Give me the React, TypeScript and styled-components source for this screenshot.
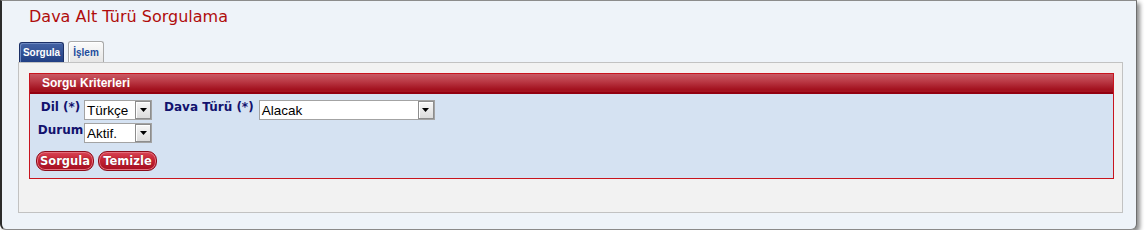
import React from 'react'
import styled, { createGlobalStyle } from 'styled-components'

const GlobalStyle = createGlobalStyle`
  html, body {
    margin: 0;
    padding: 0;
    background: #ffffff;
  }
`

const Window = styled.div`
  box-sizing: border-box;
  width: 1137px;
  height: 230px;
  padding: 6px 0 0 16px;
  background: #eef3f9;
  border-top: 1px solid #8c8c8c;
  border-left: 2px solid #2b2b2b;
  border-right: 1px solid #6e6e6e;
  border-bottom: 1px solid #8a8a8a;
  border-radius: 0 0 6px 6px;
  box-shadow: 3px 3px 4px rgba(0, 0, 0, 0.45);
`

const Title = styled.h1`
  margin: 0 0 15px 11px;
  font-family: 'DejaVu Sans', Verdana, sans-serif;
  font-size: 16px;
  font-weight: normal;
  line-height: 19px;
  color: #b00c0c;
`

const TabRow = styled.div`
  display: flex;
  align-items: flex-end;
  gap: 4px;
  height: 21px;
  margin-left: 1px;
`

const Tab = styled.div<{ $active?: boolean; $width: number }>`
  box-sizing: border-box;
  width: ${p => p.$width}px;
  height: ${p => (p.$active ? '20px' : '21px')};
  display: flex;
  align-items: center;
  justify-content: center;
  font-family: 'Liberation Sans', Arial, sans-serif;
  font-size: 10px;
  font-weight: bold;
  border-radius: 3px 3px 0 0;
  color: ${p => (p.$active ? '#ffffff' : '#1d4c9c')};
  background: ${p =>
    p.$active
      ? 'linear-gradient(#4463a5, #213f84)'
      : 'linear-gradient(#fbfbfb, #e6e6e6)'};
  border: 1px solid ${p => (p.$active ? '#1b2f66' : '#a9a9a9')};
  border-bottom: none;
  box-shadow: inset 1px 1px 0 ${p => (p.$active ? '#6d88c0' : '#ffffff')};
`

const Panel = styled.div`
  box-sizing: border-box;
  width: 1105px;
  height: 151px;
  padding: 10px;
  background: #f2f2f2;
  border: 1px solid #c2c2c2;
`

const Fieldset = styled.div`
  box-sizing: border-box;
  width: 1085px;
  height: 106px;
  border: 1px solid #c8141e;
  background: #d5e2f2;
`

const Legend = styled.div`
  box-sizing: border-box;
  height: 20px;
  padding-left: 12px;
  display: flex;
  align-items: center;
  font-family: 'Liberation Sans', Arial, sans-serif;
  font-size: 12px;
  font-weight: bold;
  color: #ffffff;
  background: linear-gradient(#c85a64 0%, #bb3a46 40%, #a3121f 85%);
  border-bottom: 2px solid #920010;
`

const Body = styled.div`
  padding: 6px 0 0 7px;
  display: flex;
  flex-direction: column;
`

const Row = styled.div<{ $gap?: number }>`
  display: flex;
  align-items: flex-start;
  margin-top: ${p => p.$gap ?? 0}px;
`

const Label = styled.label<{ $width?: number }>`
  width: ${p => (p.$width ? `${p.$width}px` : 'auto')};
  text-align: center;
  font-family: 'DejaVu Sans', Verdana, sans-serif;
  font-size: 12px;
  font-weight: bold;
  line-height: 15px;
  color: #12126e;
  margin: ${p => (p.$width ? '0' : '0 5px 0 12px')};
`

const SelectBox = styled.div<{ $width: number }>`
  box-sizing: border-box;
  width: ${p => p.$width}px;
  height: 20px;
  display: flex;
  align-items: center;
  justify-content: space-between;
  background: #ffffff;
  border: 1px solid #a3a3a3;
  font-family: 'Liberation Sans', Arial, sans-serif;
  font-size: 13.5px;
  color: #000000;
  padding-left: 2px;
`

const DropButton = styled.span`
  box-sizing: border-box;
  width: 16px;
  height: 18px;
  display: flex;
  align-items: center;
  justify-content: center;
  background: linear-gradient(#f7f7f7, #dcdcdc);
  border: 1px solid #8d8d8d;
  box-shadow: inset 1px 1px 0 #ffffff;
`

const ButtonRow = styled.div`
  display: flex;
  gap: 4px;
  margin-top: 8px;
  margin-left: -1px;
`

const RedButton = styled.button<{ $width: number }>`
  box-sizing: border-box;
  width: ${p => p.$width}px;
  height: 20px;
  padding: 0;
  font-family: 'DejaVu Sans', Verdana, sans-serif;
  font-size: 11.5px;
  font-weight: bold;
  color: #ffffff;
  background: linear-gradient(#d84454 0%, #c42334 45%, #a40f20 100%);
  border: 1px solid #8e0c1a;
  border-radius: 9px;
  box-shadow: inset 0 0 0 1px #e4707c;
  text-shadow: 0 0 1px #6a0010;
`

function Select({ value, width }: { value: string; width: number }) {
  return (
    <SelectBox $width={width}>
      <span>{value}</span>
      <DropButton>
        <svg width="7" height="4" viewBox="0 0 7 4">
          <path d="M0 0h7L3.5 4z" fill="#000" />
        </svg>
      </DropButton>
    </SelectBox>
  )
}

function App() {
  return (
    <>
      <GlobalStyle />
      <Window>
        <Title>Dava Alt Türü Sorgulama</Title>
        <TabRow>
          <Tab $active $width={45}>Sorgula</Tab>
          <Tab $width={36}>İşlem</Tab>
        </TabRow>
        <Panel>
          <Fieldset>
            <Legend>Sorgu Kriterleri</Legend>
            <Body>
              <Row>
                <Label $width={47}>Dil (*)</Label>
                <Select value="Türkçe" width={68} />
                <Label>Dava Türü (*)</Label>
                <Select value="Alacak" width={176} />
              </Row>
              <Row $gap={3}>
                <Label $width={47}>Durum</Label>
                <Select value="Aktif." width={68} />
              </Row>
              <ButtonRow>
                <RedButton $width={58}>Sorgula</RedButton>
                <RedButton $width={59}>Temizle</RedButton>
              </ButtonRow>
            </Body>
          </Fieldset>
        </Panel>
      </Window>
    </>
  )
}

export default App
